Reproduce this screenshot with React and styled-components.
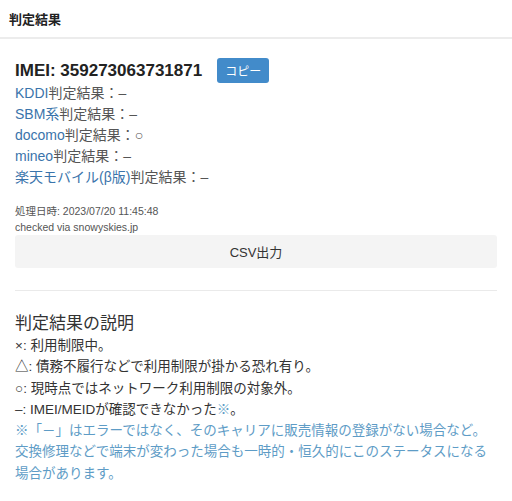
import React from "react";
import styled, { createGlobalStyle } from "styled-components";

const Global = createGlobalStyle`
  html, body { margin: 0; padding: 0; background: #fff; }
  body { font-family: "Liberation Sans", "Noto Sans CJK JP", sans-serif; color: #333; }
`;

const Header = styled.header`
  height: 37px;
  display: flex;
  align-items: center;
  padding-left: 9px;
  border-bottom: 2px solid #ececec;
  font-size: 13px;
  font-weight: bold;
  color: #222;
`;

const Body = styled.main`
  padding: 19px 15px 0 15px;
`;

const ImeiRow = styled.div`
  display: flex;
  align-items: center;
  height: 25px;
  gap: 15px;
`;

const Imei = styled.h2`
  margin: 0;
  font-size: 17px;
  font-weight: bold;
  color: #222;
`;

const CopyButton = styled.button`
  width: 52px;
  height: 25px;
  border: none;
  border-radius: 3px;
  background: #428bca;
  color: #fff;
  font-family: inherit;
  font-size: 12px;
  padding: 0;
`;

const ResultList = styled.div`
  display: flex;
  flex-direction: column;
  font-size: 14px;
  line-height: 21px;
  color: #555;
`;

const Carrier = styled.a`
  color: #3a74ab;
  text-decoration: none;
`;

const Meta = styled.div`
  margin-top: 15px;
  font-size: 10.5px;
  line-height: 16px;
  color: #555;
`;

const CsvButton = styled.button`
  display: block;
  width: 100%;
  height: 33px;
  border: none;
  border-radius: 3px;
  background: #f4f4f4;
  color: #333;
  font-family: inherit;
  font-size: 13px;
`;

const Divider = styled.hr`
  margin: 22px 0 0 0;
  border: none;
  border-top: 1px solid #eaeaea;
`;

const Heading = styled.h3`
  margin: 22px 0 0 0;
  font-size: 17px;
  font-weight: normal;
  line-height: 22px;
  color: #333;
`;

const Explain = styled.div`
  font-size: 13.5px;
  line-height: 21.3px;
  color: #333;
`;

const Note = styled.div`
  color: #5e9cc6;
`;

const results = [
  ["KDDI", "–"],
  ["SBM系", "–"],
  ["docomo", "○"],
  ["mineo", "–"],
  ["楽天モバイル(β版)", "–"],
];

export default function App() {
  return (
    <>
      <Global />
      <Header>判定結果</Header>
      <Body>
        <ImeiRow>
          <Imei>IMEI: 359273063731871</Imei>
          <CopyButton>コピー</CopyButton>
        </ImeiRow>
        <ResultList>
          {results.map(([name, r]) => (
            <div key={name}>
              <Carrier href="#">{name}</Carrier>判定結果：{r}
            </div>
          ))}
        </ResultList>
        <Meta>
          <div>処理日時: 2023/07/20 11:45:48</div>
          <div>checked via snowyskies.jp</div>
        </Meta>
        <CsvButton>CSV出力</CsvButton>
        <Divider />
        <Heading>判定結果の説明</Heading>
        <Explain>
          <div>×: 利用制限中。</div>
          <div>△: 債務不履行などで利用制限が掛かる恐れ有り。</div>
          <div>○: 現時点ではネットワーク利用制限の対象外。</div>
          <div>–: IMEI/MEIDが確認できなかった<Note as="span">※</Note>。</div>
          <Note>
            ※「－」はエラーではなく、そのキャリアに販売情報の登録がない場合など。
            <br />
            交換修理などで端末が変わった場合も一時的・恒久的にこのステータスになる場合があります。
          </Note>
        </Explain>
      </Body>
    </>
  );
}
